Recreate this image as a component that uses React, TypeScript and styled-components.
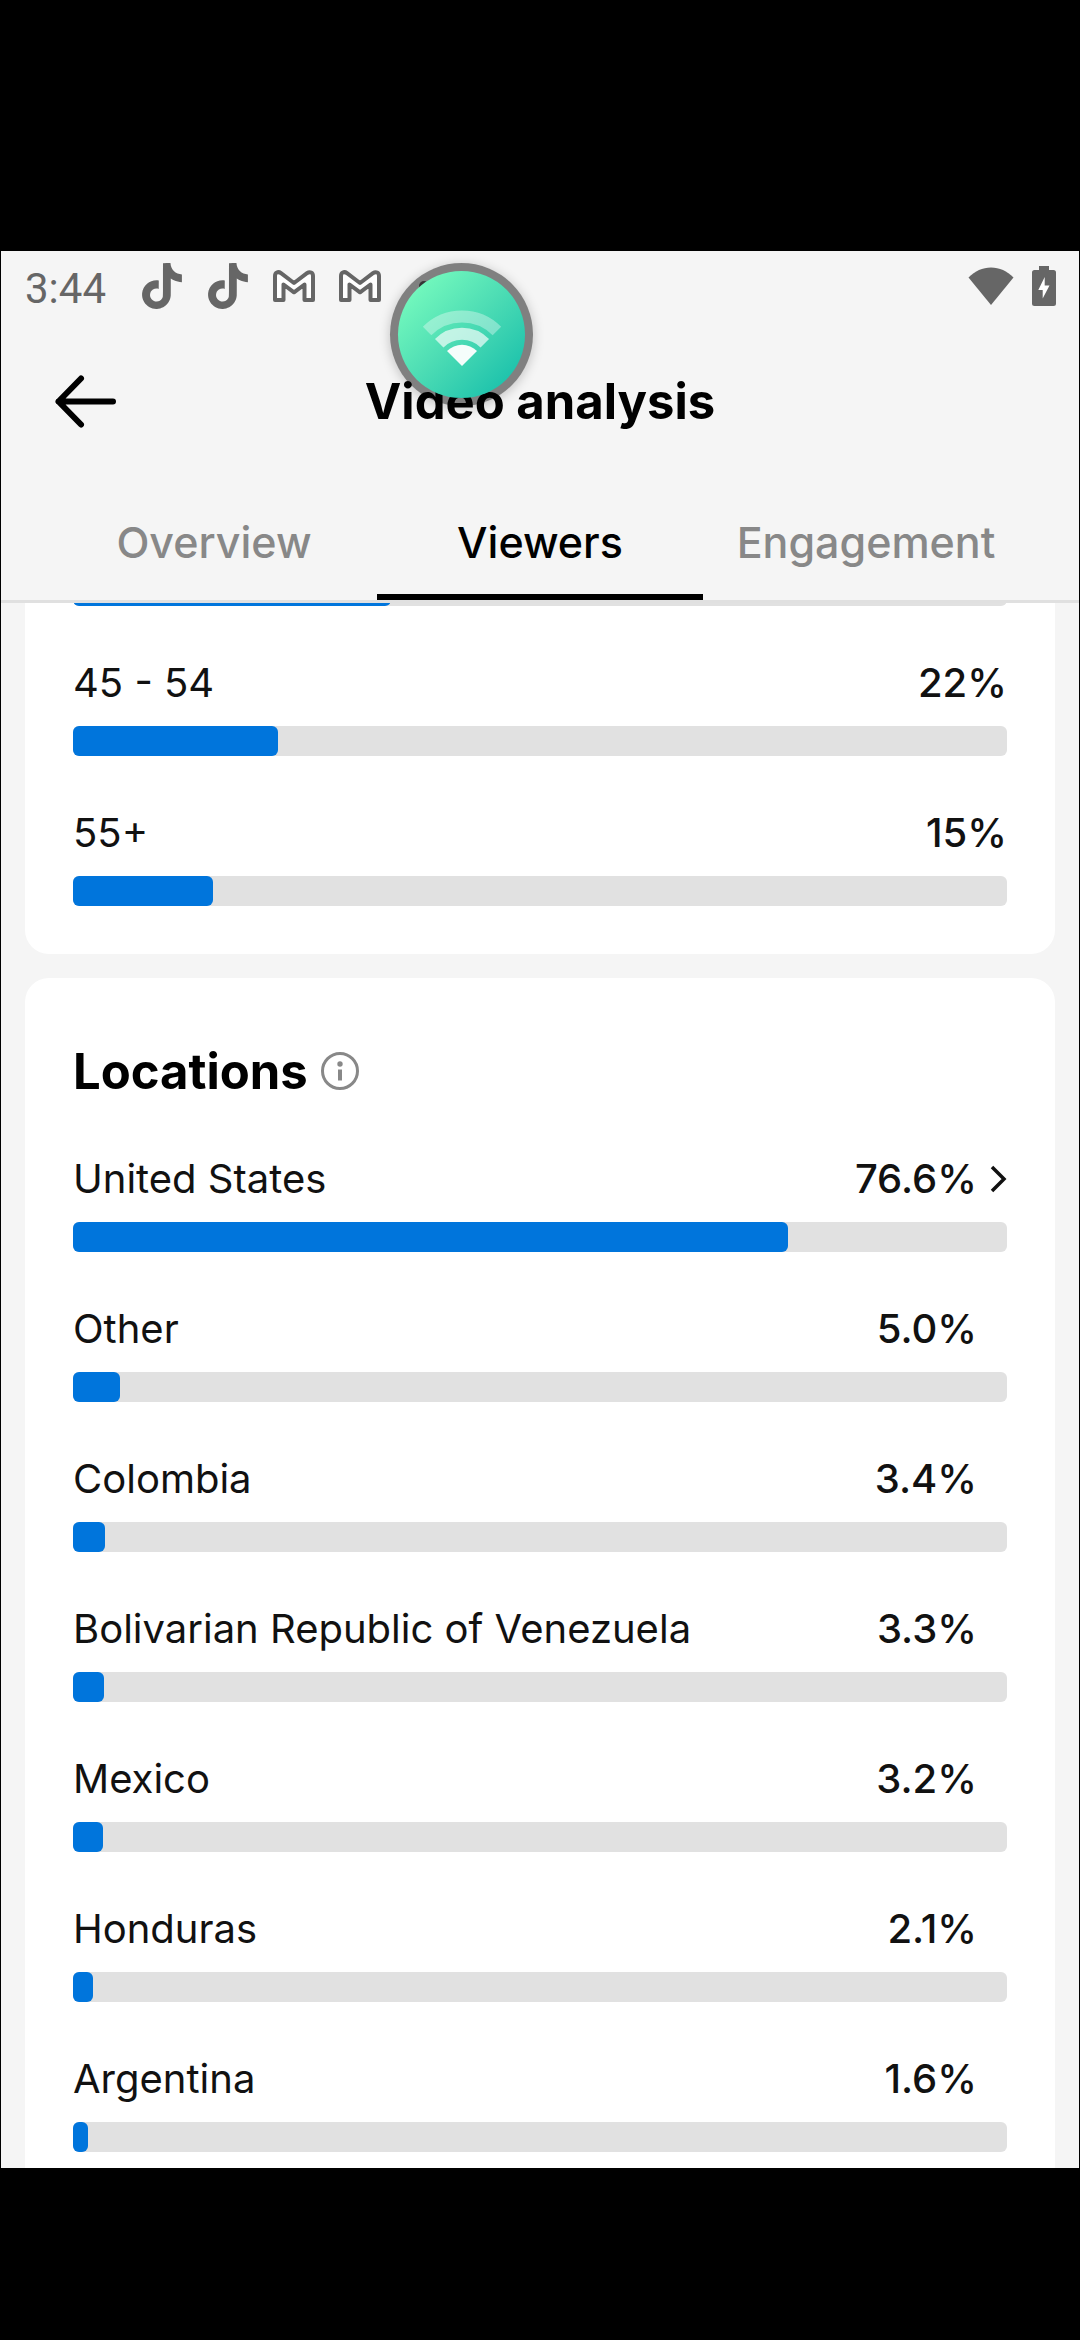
import React from "react";
import styled, { createGlobalStyle } from "styled-components";

const GlobalStyle = createGlobalStyle`
  * { box-sizing: border-box; }
  body { margin: 0; background: #000; }
  button { border: 0; padding: 0; background: none; font: inherit; color: inherit; cursor: pointer; }
`;

const Letterbox = styled.div`
  min-height: 100vh;
  padding: 251px 1px 172px;
  background: #000;
`;

const Screen = styled.div`
  position: relative;
  overflow: hidden;
  background: #f5f5f5;
  color: #000;
  font-family: Inter, "Liberation Sans", sans-serif;
`;

const StatusBar = styled.div`
  display: flex;
  align-items: center;
  height: 70px;
  padding: 0 23px 0 24px;
  color: #666;
`;

const Clock = styled.time`
  width: 116px;
  padding-top: 6px;
  font: 400 42px/50px Roboto, sans-serif;
`;

const Notifications = styled.div`
  display: flex;
  flex: 1;
  align-items: center;
  gap: 24px;
`;

const SystemIcons = styled.div`
  display: flex;
  align-items: center;
  gap: 18px;
`;

const Dot = styled.span`
  width: 10px;
  height: 10px;
  margin-left: 14px;
  border-radius: 50%;
  background: #666;
`;

const Bubble = styled.button`
  position: absolute;
  top: 12px;
  left: 389px;
  width: 143px;
  height: 143px;
  padding: 8px;
  border-radius: 50%;
  background: rgba(0, 0, 0, 0.48);
  box-shadow: 0 2px 12px rgba(0, 0, 0, 0.22);
`;

const BubbleFace = styled.span`
  display: flex;
  align-items: center;
  justify-content: center;
  height: 100%;
  border-radius: 50%;
  background: linear-gradient(135deg, #78fcbe 8%, #4cdcb4 50%, #18bfab 92%);
`;

const TitleBar = styled.header`
  display: grid;
  grid-template-columns: 1fr auto 1fr;
  align-items: center;
  height: 162px;
  padding: 0 52px;
`;

const BackButton = styled.button`
  justify-self: start;
  display: flex;
`;

const Title = styled.h1`
  margin: 0;
  font-size: 49px;
  font-weight: 700;
  line-height: 60px;
`;

const Tabs = styled.nav`
  display: flex;
  padding: 0 50px;
  border-bottom: 3px solid #e0e0e0;
`;

const Tab = styled.button<{ $active?: boolean }>`
  flex: 1 1 0;
  height: 117px;
  font-size: 43px;
  font-weight: 500;
  color: ${(p) => (p.$active ? "#000" : "#888")};
  box-shadow: ${(p) => (p.$active ? "inset 0 -6px #000" : "none")};
`;

const Content = styled.main`
  display: flex;
  flex-direction: column;
  gap: 24px;
  padding: 0 24px;
  overflow: hidden;
`;

const Card = styled.section<{ $place: "scrolled" | "last" }>`
  display: flex;
  flex-direction: column;
  gap: 48px;
  background: #fff;
  ${(p) =>
    p.$place === "scrolled"
      ? "margin-top: -27px; padding: 0 48px 48px; border-radius: 0 0 24px 24px;"
      : "padding: 64px 48px 16px; border-radius: 24px 24px 0 0;"}
`;

const CardHeading = styled.div`
  display: flex;
  align-items: center;
  gap: 12px;
`;

const CardTitle = styled.h2`
  margin: 0;
  font-size: 49px;
  font-weight: 700;
  line-height: 60px;
`;

const InfoButton = styled.button`
  display: flex;
`;

const Row = styled.div`
  display: flex;
  flex-direction: column;
  gap: 14px;
`;

const RowHead = styled.div`
  display: flex;
  align-items: center;
  font-size: 40px;
  line-height: 58px;
  color: #111;
`;

const Label = styled.span`
  flex: 1;
`;

const Value = styled.span`
  font-weight: 500;
`;

const ChevronSlot = styled.span`
  display: flex;
  justify-content: flex-end;
  width: 30px;
`;

const Track = styled.div`
  height: 30px;
  border-radius: 6px;
  background: #e1e1e1;
`;

const Fill = styled.div`
  height: 100%;
  border-radius: 6px;
  background: #0075dc;
`;

const Bar = ({ name, percent }: { name: string; percent: number }) => (
  <Track role="meter" aria-label={name} aria-valuenow={percent} aria-valuemin={0} aria-valuemax={100}>
    <Fill style={{ width: `${percent}%` }} />
  </Track>
);

const TikTokIcon = () => (
  <svg width="42" height="46" viewBox="1 0 22 24" fill="currentColor" aria-hidden="true">
    <path d="M12.525.02c1.31-.02 2.61-.01 3.91-.02.08 1.53.63 3.09 1.75 4.17 1.12 1.11 2.7 1.62 4.24 1.79v4.03c-1.44-.05-2.89-.35-4.2-.97-.57-.26-1.1-.59-1.62-.93-.01 2.92.01 5.84-.02 8.75-.08 1.4-.54 2.79-1.35 3.94-1.31 1.92-3.58 3.17-5.91 3.21-1.43.08-2.86-.31-4.08-1.03-2.02-1.19-3.44-3.37-3.65-5.71-.02-.5-.03-1-.01-1.49.18-1.9 1.12-3.72 2.58-4.96 1.66-1.44 3.98-2.13 6.15-1.72.02 1.48-.04 2.96-.04 4.44-.99-.32-2.15-.23-3.02.37-.63.41-1.11 1.04-1.36 1.75-.21.51-.15 1.07-.14 1.61.24 1.64 1.82 3.02 3.5 2.87 1.12-.01 2.19-.66 2.77-1.61.19-.33.4-.67.41-1.06.1-1.79.06-3.57.07-5.36.01-4.03-.01-8.05.02-12.07z" />
  </svg>
);

const GmailIcon = () => (
  <svg width="42" height="32" viewBox="0 0 42 32" fill="#fff" stroke="currentColor" strokeWidth="4" strokeLinejoin="round" aria-hidden="true">
    <path d="M2 30V6C2 2.500 5 1 8 3.200L21 13 34 3.200C37 1 40 2.500 40 6V30H31.500V14.500L21 22.300 10.500 14.500V30Z" />
  </svg>
);

const WifiIcon = () => (
  <svg width="46" height="38" viewBox="0 0 46 38" fill="currentColor" aria-hidden="true">
    <path d="M23 38 .5 10.500C7 4 14.500.5 23 .5S39 4 45.500 10.500Z" />
  </svg>
);

const BatteryIcon = () => (
  <svg width="24" height="40" viewBox="0 0 24 40" aria-hidden="true">
    <path fill="currentColor" d="M7 0H17V4H21.500Q24 4 24 6.500V37.500Q24 40 21.500 40H2.500Q0 40 0 37.500V6.500Q0 4 2.500 4H7Z" />
    <path fill="#fff" d="M12.700 11 6.300 24H10.700V32.500L17.500 19.500H12.700Z" />
  </svg>
);

const SignalIcon = () => (
  <svg width="84" height="64" viewBox="-42 -63 84 64" fill="none" stroke="#fff" strokeWidth="12" aria-hidden="true">
    <path opacity=".35" d="M-34.900-34.900A49.300 49.300 0 0 1 34.900-34.900" />
    <path opacity=".65" d="M-22.800-22.800A32.300 32.300 0 0 1 22.800-22.800" />
    <path opacity=".95" fill="#fff" stroke="none" d="M0 0-15-15A21.200 21.200 0 0 1 15-15Z" />
  </svg>
);

const BackIcon = () => (
  <svg width="64" height="56" viewBox="0 0 64 56" fill="none" stroke="#000" strokeWidth="6" strokeLinecap="round" strokeLinejoin="round" aria-hidden="true">
    <path d="M28 4.500 5.500 27.500 28 50.500M5.500 27.500H60" />
  </svg>
);

const InfoIcon = () => (
  <svg width="40" height="40" viewBox="0 0 40 40" fill="none" stroke="#888" strokeWidth="3" aria-hidden="true">
    <circle cx="20" cy="19" r="17.500" />
    <path d="M20 17.500V28.500" strokeWidth="4" />
    <circle cx="20" cy="12" r="2.700" fill="#888" stroke="none" />
  </svg>
);

const ChevronIcon = () => (
  <svg width="18" height="28" viewBox="0 0 18 28" fill="none" stroke="#111" strokeWidth="3.500" aria-hidden="true">
    <path d="M3 2 15 14 3 26" />
  </svg>
);

const ages = [
  { name: "45 - 54", percent: 22 },
  { name: "55+", percent: 15 },
];

const locations = [
  { name: "United States", percent: 76.6, opens: true },
  { name: "Other", percent: 5.0 },
  { name: "Colombia", percent: 3.4 },
  { name: "Bolivarian Republic of Venezuela", percent: 3.3 },
  { name: "Mexico", percent: 3.2 },
  { name: "Honduras", percent: 2.1 },
  { name: "Argentina", percent: 1.6 },
];

export default function App() {
  return (
    <Letterbox>
      <GlobalStyle />
      <Screen>
        <StatusBar>
          <Clock>3:44</Clock>
          <Notifications>
            <TikTokIcon />
            <TikTokIcon />
            <GmailIcon />
            <GmailIcon />
            <Dot />
          </Notifications>
          <SystemIcons>
            <WifiIcon />
            <BatteryIcon />
          </SystemIcons>
        </StatusBar>
        <TitleBar>
          <BackButton aria-label="Back">
            <BackIcon />
          </BackButton>
          <Title>Video analysis</Title>
        </TitleBar>
        <Tabs>
          <Tab>Overview</Tab>
          <Tab $active>Viewers</Tab>
          <Tab>Engagement</Tab>
        </Tabs>
        <Content>
          <Card $place="scrolled">
            <Bar name="35 - 44" percent={34} />
            {ages.map((a) => (
              <Row key={a.name}>
                <RowHead>
                  <Label>{a.name}</Label>
                  <Value>{a.percent}%</Value>
                </RowHead>
                <Bar {...a} />
              </Row>
            ))}
          </Card>
          <Card $place="last">
            <CardHeading>
              <CardTitle>Locations</CardTitle>
              <InfoButton aria-label="About locations">
                <InfoIcon />
              </InfoButton>
            </CardHeading>
            {locations.map((l) => (
              <Row key={l.name}>
                <RowHead>
                  <Label>{l.name}</Label>
                  <Value>{l.percent.toFixed(1)}%</Value>
                  <ChevronSlot>{l.opens && <ChevronIcon />}</ChevronSlot>
                </RowHead>
                <Bar name={l.name} percent={l.percent} />
              </Row>
            ))}
          </Card>
        </Content>
        <Bubble aria-label="Network status">
          <BubbleFace>
            <SignalIcon />
          </BubbleFace>
        </Bubble>
      </Screen>
    </Letterbox>
  );
}
